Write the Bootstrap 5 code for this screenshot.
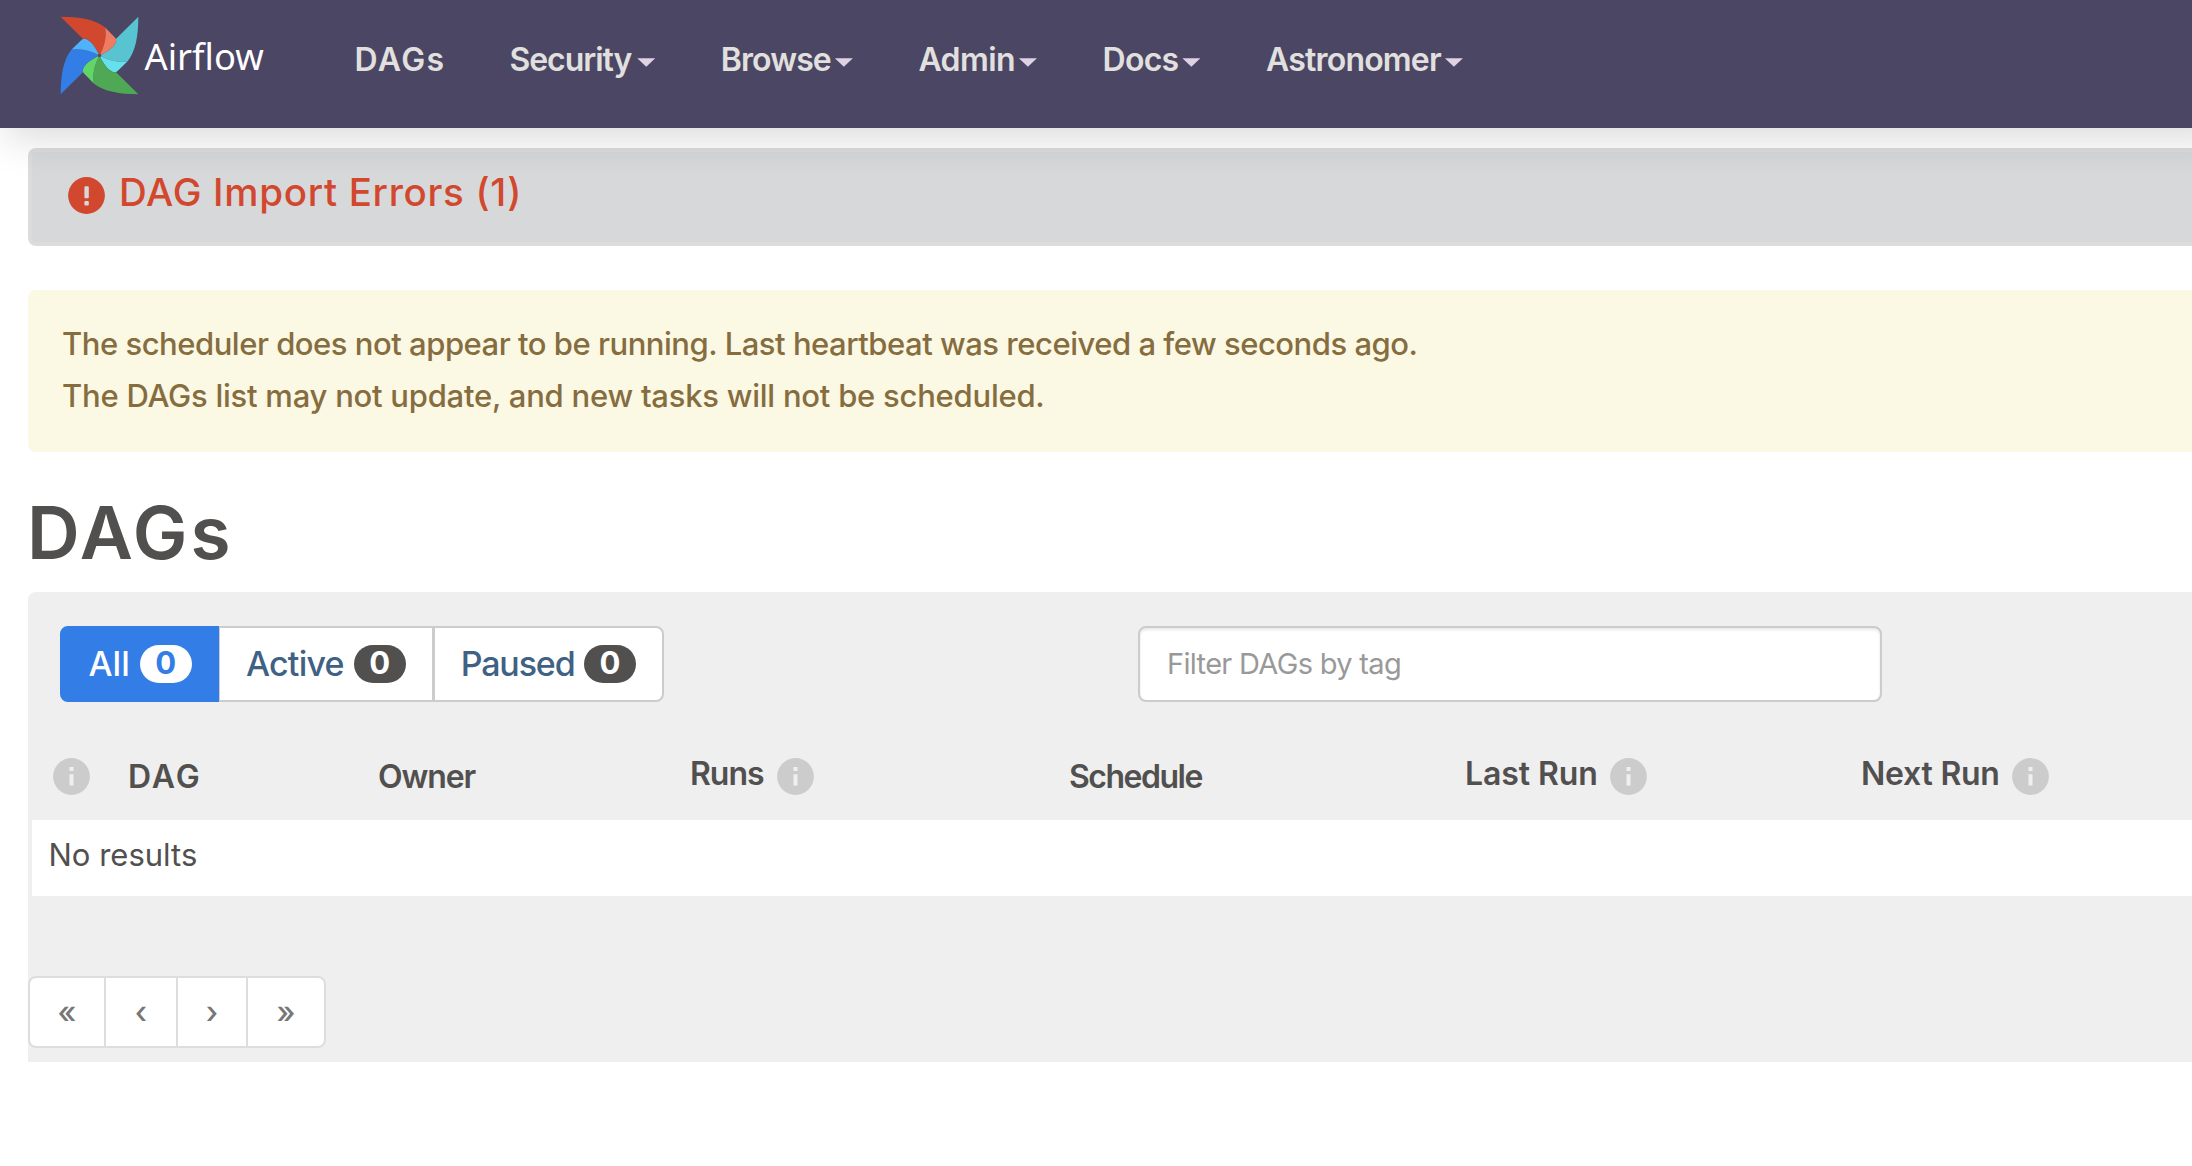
<!DOCTYPE html>
<html lang="en">
<head>
<meta charset="utf-8">
<meta name="viewport" content="width=device-width, initial-scale=1">
<title>DAGs - Airflow</title>
<link rel="stylesheet" href="https://cdn.jsdelivr.net/npm/bootstrap@5.3.0/dist/css/bootstrap.min.css">
<style>
body{font-family:Inter,"Liberation Sans",sans-serif;color:#51504f;background:#fff;overflow:hidden}
.af-nav{height:128px;background:#4a4664;box-shadow:0 16px 40px -6px rgba(0,0,0,.15);z-index:5;padding:0 0 0 60px;margin-right:-40px}
.af-logo{width:79px;height:79px;margin-bottom:18px}
.af-name{font:400 36.3px/50px "Noto Sans",sans-serif;color:#fff;width:210px;margin:0 0 17px 5.5px}
.af-menu .nav-link{font-size:32px;line-height:40px;font-weight:600;color:#e2e0de;padding:0;margin:0 65.6px 9px 0}
.af-menu .af-caret{width:18px;height:8.5px;background:#dfd2e3;clip-path:polygon(0 0,100% 0,50% 100%);margin:6px 0 0 4px}
main{padding:20px 0 0 28px}
.af-error{height:98px;background:#d7d8da;border:4px solid #dcdcdc;border-right:0;border-radius:8px 0 0 8px;color:#d2482f;padding:0 0 10px 36px;font-size:38.5px;font-weight:500;letter-spacing:.7px;line-height:48px}
.af-error svg{width:37px;height:37px;margin:6px 14px 0 0}
.af-warn{height:162px;margin-top:44px;background:#fbf8e4;color:#866d3f;border-radius:8px 0 0 8px;padding:28px 0 0 34px;font-size:31px;font-weight:500;line-height:52px}
.af-title{font-size:73px;line-height:80px;font-weight:600;letter-spacing:2.9px;margin:41px 0 19px -1px}
.af-panel{height:470px;background:#efefef;border-radius:8px 0 0 0}
.af-tools{padding:34px 0 0 32px}
.af-filter .btn{height:76px;font-size:34px;font-weight:500;border:2px solid #ccc;background:#fff;color:#3f6184;padding:0 26px;line-height:72px;--bs-btn-border-radius:8px}
.af-filter .btn.active{background:#337de6;border-color:#337de6;color:#fff;width:159px;padding:0 0 0 26.5px}
.af-filter .af-count{width:52px;height:38px;border-radius:19px;background:#51504f;color:#fff;font-size:31px;font-weight:700;line-height:36px;text-align:center}
.af-filter .active .af-count{background:#fff;color:#337de6}
.af-search{width:744px;height:76px;margin-left:474px;border:2px solid #ccc;border-radius:8px;padding:0 27px 2px;font-size:29px;letter-spacing:-.68px;box-shadow:inset 0 2px 3px rgba(0,0,0,.09)}
.af-search::placeholder{color:#999;opacity:1}
.af-table{table-layout:fixed;width:2164px;margin:0;border-collapse:collapse;color:#51504f;--bs-table-bg:transparent}
.af-table th{height:118px;padding:32px 0 0;border:0;font-size:32px;line-height:40px;font-weight:600;vertical-align:middle;background:#efefef;color:#51504f}
.af-table svg{width:37px;height:37px;flex:none;margin-bottom:2px}
.af-table .af-up{margin-bottom:7px}
.af-table td{height:76px;padding:0 0 6px 16.5px;border:0;border-left:4px solid #efefef;background:#fff;font-size:31px;line-height:40px;vertical-align:middle;color:#51504f}
.af-pages{margin:80px 0 0}
.af-pages .page-link{height:72px;border:2px solid #ddd;color:#777;font-size:31px;font-weight:500;line-height:68px;padding:0;text-align:center;background:#fff}
.af-pages .page-item:not(:first-child) .page-link{margin-left:-2px}
.af-pages .page-item:first-child .page-link{border-radius:8px 0 0 8px}
.af-pages .page-item:last-child .page-link{border-radius:0 8px 8px 0}
.w-a{width:78px}.w-b{width:74px}.w-c{width:72px}.w-d{width:80px}
</style>
</head>
<body>
<svg class="d-none">
  <symbol id="info" viewBox="0 0 37 37"><circle cx="18.5" cy="18.5" r="18.4" fill="#ccc"/><path d="M16.5 9h4v4h-4zM16.5 16.3h4v11.2h-4z" fill="#efefef"/></symbol>
</svg>

<nav class="navbar af-nav position-relative d-flex flex-nowrap justify-content-start align-items-center">
  <svg class="af-logo" viewBox="-118 -118 236 236">
    <defs>
      <path id="blade" d="M116-116C116-60 108-12 84 17C55 22 25 14 0 0C26-12 48-28 50-44L49-49Z"/>
      <path id="fold" d="M84 17L54 46Q49 51 44 50C28 48 12 26 0 0C25 14 55 22 84 17Z"/>
    </defs>
    <use href="#blade" fill="#58c3d1"/><use href="#fold" fill="#67e0ed"/>
    <g transform="rotate(90)"><use href="#blade" fill="#4fa853"/><use href="#fold" fill="#62d568"/></g>
    <g transform="rotate(180)"><use href="#blade" fill="#337de6"/><use href="#fold" fill="#50b2f8"/></g>
    <g transform="rotate(270)"><use href="#blade" fill="#d2482f"/><use href="#fold" fill="#ef7c60"/></g>
    <circle r="5" fill="#51504f"/>
  </svg>
  <span class="af-name">Airflow</span>
  <div class="af-menu d-flex align-items-center">
    <a class="nav-link" href="#" style="letter-spacing:1.39px;margin-right:64px">DAGs</a>
    <a class="nav-link d-flex align-items-center" href="#"><span style="letter-spacing:-1.05px;margin-right:2px">Security</span><i class="af-caret"></i></a>
    <a class="nav-link d-flex align-items-center" href="#"><span style="letter-spacing:-.91px">Browse</span><i class="af-caret"></i></a>
    <a class="nav-link d-flex align-items-center" href="#"><span style="letter-spacing:-.61px">Admin</span><i class="af-caret"></i></a>
    <a class="nav-link d-flex align-items-center" href="#"><span style="letter-spacing:-.74px">Docs</span><i class="af-caret"></i></a>
    <a class="nav-link d-flex align-items-center" href="#"><span style="letter-spacing:-.8px">Astronomer</span><i class="af-caret"></i></a>
  </div>
</nav>

<main>
  <div class="af-error d-flex align-items-center">
    <svg viewBox="0 0 37 37"><circle cx="18.5" cy="18.5" r="18.4" fill="#d2482f"/><path d="M17.4 10.3h2.4v9.9h-2.4zM17.4 25h2.4v2.6h-2.4z" fill="#d7d8da" stroke="#d7d8da" stroke-width="2" stroke-linejoin="round"/></svg>
    <span>DAG Import Errors (1)</span>
  </div>

  <div class="af-warn">
    <div style="letter-spacing:-.48px">The scheduler does not appear to be running. Last heartbeat was received a few seconds ago.</div>
    <div style="letter-spacing:-.24px">The DAGs list may not update, and new tasks will not be scheduled.</div>
  </div>

  <h1 class="af-title">DAGs</h1>

  <div class="af-panel">
    <div class="af-tools d-flex">
      <div class="btn-group af-filter">
        <a class="btn active d-flex align-items-center" href="#"><span style="margin-right:10px">All</span><span class="af-count">0</span></a>
        <a class="btn d-flex align-items-center" href="#"><span style="letter-spacing:-.8px;margin-right:10px">Active</span><span class="af-count">0</span></a>
        <a class="btn d-flex align-items-center" href="#"><span style="letter-spacing:-1.14px;margin-right:9.5px">Paused</span><span class="af-count">0</span></a>
      </div>
      <input class="form-control af-search" type="text" placeholder="Filter DAGs by tag">
    </div>

    <table class="table af-table">
      <colgroup><col style="width:98px"><col style="width:250px"><col style="width:312px"><col style="width:379px"><col style="width:396px"><col style="width:396px"><col></colgroup>
      <thead>
        <tr>
          <th><div class="d-flex" style="padding-left:23px"><svg><use href="#info"/></svg></div></th>
          <th><span style="letter-spacing:2px">DAG</span></th>
          <th><span style="letter-spacing:-1.11px">Owner</span></th>
          <th><div class="d-flex align-items-center"><span class="af-up" style="letter-spacing:-1.02px;margin-right:13px">Runs</span><svg><use href="#info"/></svg></div></th>
          <th><span style="letter-spacing:-1.49px">Schedule</span></th>
          <th><div class="d-flex align-items-center"><span class="af-up" style="letter-spacing:-.1px;margin-right:12px">Last Run</span><svg><use href="#info"/></svg></div></th>
          <th><div class="d-flex align-items-center"><span class="af-up" style="letter-spacing:-.25px;margin-right:12px">Next Run</span><svg><use href="#info"/></svg></div></th>
        </tr>
      </thead>
      <tbody>
        <tr><td colspan="7">No results</td></tr>
      </tbody>
    </table>

    <ul class="pagination af-pages">
      <li class="page-item"><a class="page-link w-a" href="#">«</a></li>
      <li class="page-item"><a class="page-link w-b" href="#">‹</a></li>
      <li class="page-item"><a class="page-link w-c" href="#">›</a></li>
      <li class="page-item"><a class="page-link w-d" href="#">»</a></li>
    </ul>
  </div>
</main>
<script src="https://cdn.jsdelivr.net/npm/bootstrap@5.3.0/dist/js/bootstrap.bundle.min.js"></script>
</body>
</html>
